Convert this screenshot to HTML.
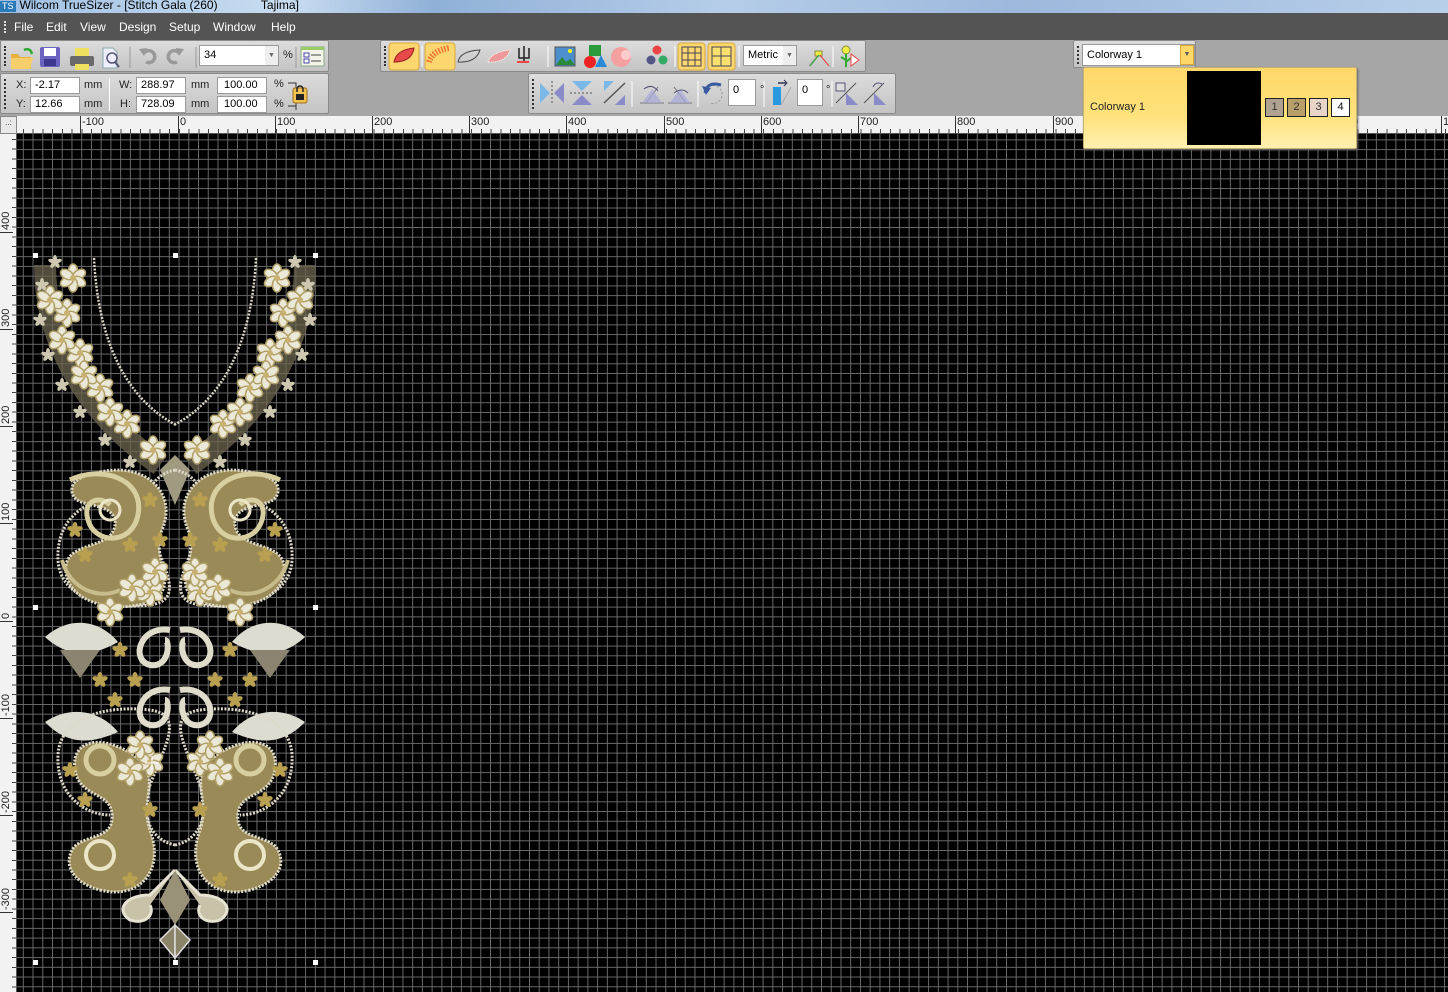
<!DOCTYPE html>
<html><head><meta charset="utf-8">
<style>
*{margin:0;padding:0;box-sizing:border-box}
body{width:1448px;height:992px;overflow:hidden;background:#a6a6a6;font-family:"Liberation Sans",sans-serif;position:relative}
.abs{position:absolute}
#title{left:0;top:0;width:1448px;height:13px;background:linear-gradient(90deg,#9fc0e4 0%,#c9ddf0 20%,#8fb0d8 30%,#b5cde8 50%,#9cb8dc 70%,#b8cfe9 100%);font-size:12px;line-height:11px;color:#000;overflow:hidden}
#menu{left:0;top:13px;width:1448px;height:27px;background:#545454;color:#fff;font-size:12px}
#menu span{position:absolute;top:7px}
.panel{background:linear-gradient(#dcdcdc,#c4c4c4);border:1px solid #8a8a8a;border-radius:2px}
.grip{position:absolute;left:3px;top:5px;width:2px;border-left:2px dotted #333}
.box{position:absolute;background:#fff;border:1px solid #9a9a9a;font-size:11px;line-height:15px;padding-left:4px;color:#000}
.lbl{position:absolute;font-size:11px;color:#222}
#canvas{left:17px;top:134px;width:1431px;height:858px;background-color:#000;
background-image:linear-gradient(90deg,#6a6a6a 1px,transparent 1px),linear-gradient(#6a6a6a 1px,transparent 1px);
background-size:9.74px 9.74px;background-position:5.8px 5.4px}
#hruler{left:17px;top:116px;width:1431px;height:18px;background:#f2f2f2;border-bottom:1px solid #555;
background-image:repeating-linear-gradient(90deg,#444 0 1px,transparent 1px 9.74px);background-size:100% 5px;background-repeat:no-repeat;background-position:5.8px 13px}
#vruler{left:0;top:134px;width:17px;height:858px;background:#f2f2f2;border-right:1px solid #555;
background-image:repeating-linear-gradient(180deg,#444 0 1px,transparent 1px 9.74px);background-size:5px 100%;background-repeat:no-repeat;background-position:12px 5.4px}
.hl{position:absolute;top:116px;font-size:11px;color:#222;border-left:1px solid #333;height:18px;padding-left:1px;line-height:12px}
.vl{position:absolute;left:0;font-size:11px;color:#222;transform:rotate(-90deg);transform-origin:0 0;width:30px;border-left:1px solid #333;height:13px;line-height:12px;padding-left:2px}
.hd{position:absolute;width:5px;height:5px;background:#fff}
</style></head><body>
<div id="title" class="abs"><span style="display:inline-block;background:#2a7ab8;color:#fff;font-size:9px;padding:0 2px;margin-right:4px">TS</span>Wilcom TrueSizer - [Stitch Gala (260)&nbsp;&nbsp;&nbsp;&nbsp;&nbsp;&nbsp;&nbsp;&nbsp;&nbsp;&nbsp;&nbsp;&nbsp;&nbsp;Tajima]</div>
<div id="menu" class="abs">
<div style="position:absolute;left:4px;top:8px;height:12px;border-left:2px dotted #ddd"></div>
<span style="left:14px">File</span><span style="left:46px">Edit</span><span style="left:80px">View</span><span style="left:119px">Design</span><span style="left:169px">Setup</span><span style="left:213px">Window</span><span style="left:271px">Help</span></div>

<div class="abs panel" style="left:0;top:40px;width:329px;height:32px"><div class="grip" style="height:20px"></div></div>
<svg class="abs" style="left:0;top:40px" width="330" height="32">
<path d="M11 14h7l2 3h11v12H11z" fill="#e8b040"/><path d="M11 18h22l-3 11H11z" fill="#f6cf6a"/><path d="M24 10q6-3 8 4" stroke="#3a3" stroke-width="2.5" fill="none"/>
<rect x="40" y="7" width="20" height="20" rx="2" fill="#6a64c0"/><rect x="44" y="8" width="12" height="8" fill="#fff"/><rect x="44" y="19" width="12" height="7" fill="#3d3890"/>
<rect x="70" y="16" width="24" height="10" rx="2" fill="#6a6a6a"/><rect x="75" y="8" width="14" height="8" fill="#f0e060"/><rect x="75" y="24" width="14" height="6" fill="#f0e060"/>
<path d="M103 8h10l4 4v16h-14z" fill="#eef" stroke="#8aa"/><circle cx="112" cy="18" r="5" fill="none" stroke="#557" stroke-width="1.5"/><path d="M115 22l4 5" stroke="#557" stroke-width="2"/>
<line x1="130" y1="7" x2="130" y2="28" stroke="#999"/>
<path d="M146 22a6 6 0 1 0-2-9" stroke="#999" stroke-width="3.5" fill="none"/><path d="M139 9l5 7 3-8z" fill="#999"/>
<path d="M177 22a6 6 0 1 1 2-9" stroke="#999" stroke-width="3.5" fill="none"/><path d="M184 9l-5 7-3-8z" fill="#999"/>
<line x1="196" y1="7" x2="196" y2="28" stroke="#999"/>
<line x1="296" y1="7" x2="296" y2="28" stroke="#999"/>
<rect x="301" y="7" width="23" height="19" fill="#f4f4e8" stroke="#8a8"/><rect x="301" y="7" width="23" height="3" fill="#9c6"/><rect x="304" y="13" width="5" height="4" fill="#fff" stroke="#44a"/><rect x="304" y="19" width="5" height="4" fill="#fff" stroke="#44a"/><line x1="311" y1="15" x2="321" y2="15" stroke="#444"/><line x1="311" y1="21" x2="321" y2="21" stroke="#444"/>
</svg>
<div class="box" style="left:199px;top:45px;width:80px;height:21px;line-height:19px">34</div>
<div class="abs" style="left:265px;top:46px;width:13px;height:19px;background:#eee;font-size:7px;color:#666;text-align:center;line-height:19px">▼</div>
<div class="lbl" style="left:283px;top:49px">%</div>

<div class="abs panel" style="left:0;top:73px;width:329px;height:41px"><div class="grip" style="height:30px"></div></div>
<div class="lbl" style="left:16px;top:79px">X:</div><div class="box" style="left:30px;top:77px;width:50px;height:17px">-2.17</div><div class="lbl" style="left:84px;top:79px">mm</div>
<div class="lbl" style="left:16px;top:98px">Y:</div><div class="box" style="left:30px;top:96px;width:50px;height:17px">12.66</div><div class="lbl" style="left:84px;top:98px">mm</div>
<div class="abs" style="left:109px;top:78px;height:33px;border-left:1px solid #fff"></div>
<div class="lbl" style="left:119px;top:79px">W:</div><div class="box" style="left:136px;top:77px;width:50px;height:17px">288.97</div><div class="lbl" style="left:191px;top:79px">mm</div>
<div class="lbl" style="left:120px;top:98px">H:</div><div class="box" style="left:136px;top:96px;width:50px;height:17px">728.09</div><div class="lbl" style="left:191px;top:98px">mm</div>
<div class="box" style="left:217px;top:77px;width:50px;height:17px;padding-left:6px">100.00</div><div class="lbl" style="left:274px;top:78px">%</div>
<div class="box" style="left:217px;top:96px;width:50px;height:17px;padding-left:6px">100.00</div><div class="lbl" style="left:274px;top:98px">%</div>
<svg class="abs" style="left:286px;top:80px" width="30" height="30"><path d="M2 3h8v27M2 26h8" stroke="#333" fill="none"/><rect x="7" y="8" width="14" height="15" rx="2" fill="#f0c050" stroke="#a07020"/><rect x="10" y="14" width="8" height="6" fill="#222"/><path d="M11 12v-3a3 3 0 0 1 6 0v3" stroke="#222" fill="none" stroke-width="1.5"/></svg>

<div class="abs panel" style="left:380px;top:40px;width:486px;height:32px"><div class="grip" style="height:20px"></div></div>
<svg class="abs" style="left:380px;top:40px" width="490" height="32">
<rect x="9" y="3" width="30" height="27" rx="3" fill="#fcd770" stroke="#d8a838"/><path d="M14 22q2-12 20-14q-2 14-20 14z" fill="#e84a4a" stroke="#922"/>
<line x1="42" y1="6" x2="42" y2="27" stroke="#fff"/>
<rect x="45" y="3" width="30" height="27" rx="3" fill="#fcd770" stroke="#d8a838"/><path d="M49 22q3-11 20-14" stroke="#f07030" stroke-width="6" stroke-dasharray="1.5 1.5" fill="none"/>
<path d="M78 22q2-11 22-12q-4 13-22 12z" fill="none" stroke="#444"/>
<path d="M108 22q3-10 22-12q-4 13-22 12z" fill="#e99" stroke="#fff" stroke-dasharray="1 1"/>
<path d="M144 6v16M139 8v10h10v-10" stroke="#222" fill="none" stroke-width="1.5"/><path d="M137 22h12" stroke="#e44" stroke-width="2"/>
<line x1="168" y1="6" x2="168" y2="27" stroke="#fff"/>
<rect x="175" y="7" width="20" height="19" fill="#4b8fcc" stroke="#555"/><path d="M176 25l6-8 4 5 4-3 5 6z" fill="#2a8a3a"/><circle cx="190" cy="11" r="2" fill="#ff0"/>
<rect x="209" y="5" width="12" height="11" fill="#2a9a3a"/><circle cx="210" cy="22" r="6" fill="#e22"/><path d="M215 27l6-12 6 12z" fill="#2a8ad8"/>
<circle cx="241" cy="17" r="10" fill="#f4a0a0"/><circle cx="246" cy="15" r="5" fill="#fcc"/>
<circle cx="277" cy="10" r="4.5" fill="#e44"/><circle cx="271" cy="20" r="4.5" fill="#558"/><circle cx="283" cy="20" r="4.5" fill="#3a6"/>
<line x1="295" y1="6" x2="295" y2="27" stroke="#fff"/>
<rect x="298" y="3" width="27" height="27" rx="3" fill="#fcd770" stroke="#d8a838"/><rect x="302" y="7" width="19" height="19" fill="none" stroke="#445"/><path d="M308 7v19M315 7v19M302 13h19M302 20h19" stroke="#445"/>
<rect x="328" y="3" width="27" height="27" rx="3" fill="#fcd770" stroke="#d8a838"/><rect x="332" y="7" width="19" height="19" fill="#fae070" stroke="#445"/><path d="M341 7v19M332 16h19" stroke="#445"/>
<line x1="359" y1="6" x2="359" y2="27" stroke="#fff"/>
<path d="M429 26l10-12 10 12" stroke="#999" fill="none"/><rect x="435" y="11" width="7" height="5" fill="#ee4" stroke="#884"/><path d="M430 26l9-11" stroke="#3a3"/><path d="M440 15l9 11" stroke="#e44"/>
<line x1="453" y1="6" x2="453" y2="27" stroke="#fff"/>
<circle cx="466" cy="10" r="4" fill="#ee4" stroke="#884"/><path d="M466 14v13M466 20l-5-3M466 22l5-4" stroke="#3a3" stroke-width="2"/><path d="M471 14v12l8-6z" fill="#fff" stroke="#e44"/>
</svg>
<div class="box" style="left:743px;top:45px;width:54px;height:21px;line-height:19px">Metric</div>
<div class="abs" style="left:783px;top:46px;width:13px;height:19px;background:#eee;font-size:7px;color:#666;text-align:center;line-height:19px">▼</div>

<div class="abs panel" style="left:528px;top:73px;width:368px;height:41px"><div class="grip" style="height:30px"></div></div>
<svg class="abs" style="left:528px;top:73px" width="370" height="41">
<path d="M12 10v20l10-10z" fill="#7ab8e8"/><path d="M36 10v20l-10-10z" fill="#8a8ac8"/><path d="M24 8v24" stroke="#555" stroke-dasharray="2 2"/>
<path d="M44 8h20l-10 10z" fill="#7ab8e8"/><path d="M44 32h20l-10-10z" fill="#8a8ac8"/><path d="M42 20h24" stroke="#555" stroke-dasharray="2 2"/>
<path d="M76 8h10l-10 10z" fill="#7ab8e8"/><path d="M97 32h-10l10-10z" fill="#8a8ac8"/><path d="M76 30l21-20" stroke="#555" stroke-width="1.5"/>
<line x1="104" y1="8" x2="104" y2="34" stroke="#fff"/>
<path d="M112 30h24M118 30l12-16" stroke="#777" fill="none"/><path d="M114 30l10-14 10 14z" fill="#a8a8d8" opacity=".7"/><path d="M116 16q8-6 14 2" stroke="#557" fill="none"/>
<path d="M140 30h24M158 30l-12-16" stroke="#777" fill="none"/><path d="M142 30l10-14 10 14z" fill="#a8a8d8" opacity=".7"/><path d="M146 20q8-6 14 0" stroke="#557" fill="none"/>
<line x1="170" y1="8" x2="170" y2="34" stroke="#fff"/>
<path d="M178 16a9 9 0 1 1 4 14" stroke="#999" stroke-dasharray="2 2" fill="none"/><path d="M177 20q2-12 16-8" stroke="#3a5aa0" stroke-width="3" fill="none"/><path d="M174 13l4 9 5-7z" fill="#3a5aa0"/>
<line x1="236" y1="8" x2="236" y2="34" stroke="#fff"/>
<path d="M245 14h8v18h-8z" fill="#2a9ae0"/><path d="M253 32l10-18" stroke="#aaa" fill="none"/><path d="M250 10h8" stroke="#335" stroke-width="1.5"/><path d="M256 7l3 3-3 3" stroke="#335" fill="none"/>
<line x1="304" y1="8" x2="304" y2="34" stroke="#fff"/>
<rect x="308" y="10" width="9" height="8" fill="#ddd" stroke="#557"/><path d="M318 32h12l-12-12z" fill="#8a8ac8"/><path d="M308 30l20-20" stroke="#555"/>
<path d="M346 32h12l-12-12z" fill="#8a8ac8"/><path d="M336 30l20-20" stroke="#555"/><path d="M345 14q3-6 9-3" stroke="#557" fill="none"/>
</svg>
<div class="box" style="left:728px;top:79px;width:28px;height:27px;line-height:20px">0</div><div class="lbl" style="left:760px;top:84px">°</div>
<div class="box" style="left:797px;top:79px;width:26px;height:27px;line-height:20px">0</div><div class="lbl" style="left:826px;top:84px">°</div>

<div class="abs panel" style="left:1073px;top:40px;width:123px;height:28px"><div class="grip" style="height:18px"></div></div>
<div class="box" style="left:1082px;top:44px;width:113px;height:22px;line-height:20px;font-size:11px">Colorway 1</div>
<div class="abs" style="left:1180px;top:45px;width:14px;height:20px;background:#fcd868;border:1px solid #d8a838;font-size:7px;text-align:center;line-height:18px;color:#555">▼</div>

<div id="hruler" class="abs"></div>
<div id="vruler" class="abs"></div>
<div class="abs" style="left:0;top:116px;width:17px;height:18px;background:#e8e8e8;border:1px solid #888;font-size:8px;color:#333;text-align:center;line-height:12px">..:</div>
<div class="hl" style="left:80px">-100</div><div class="hl" style="left:178px">0</div><div class="hl" style="left:275px">100</div><div class="hl" style="left:372px">200</div><div class="hl" style="left:469px">300</div><div class="hl" style="left:566px">400</div><div class="hl" style="left:664px">500</div><div class="hl" style="left:761px">600</div><div class="hl" style="left:858px">700</div><div class="hl" style="left:955px">800</div><div class="hl" style="left:1053px">900</div><div class="hl" style="left:1344px">00</div><div class="hl" style="left:1441px">1</div>
<div class="vl" style="top:233px">400</div><div class="vl" style="top:330px">300</div><div class="vl" style="top:427px">200</div><div class="vl" style="top:524px">100</div><div class="vl" style="top:622px">0</div><div class="vl" style="top:719px">-100</div><div class="vl" style="top:816px">-200</div><div class="vl" style="top:913px">-300</div>

<div id="canvas" class="abs"></div>

<svg class="abs" style="left:0;top:0" width="360" height="992">
<defs>
<g id="fl"><g fill="#ece8d8" stroke="#b0a068" stroke-width="1.5"><ellipse cx="0" cy="-7" rx="4.5" ry="7"/><ellipse cx="0" cy="-7" rx="4.5" ry="7" transform="rotate(60)"/><ellipse cx="0" cy="-7" rx="4.5" ry="7" transform="rotate(120)"/><ellipse cx="0" cy="-7" rx="4.5" ry="7" transform="rotate(180)"/><ellipse cx="0" cy="-7" rx="4.5" ry="7" transform="rotate(240)"/><ellipse cx="0" cy="-7" rx="4.5" ry="7" transform="rotate(300)"/></g><circle r="3" fill="#c8b070"/></g>
<g id="sf"><g fill="#cfc8b0"><ellipse cx="0" cy="-3.5" rx="2" ry="3.5"/><ellipse cx="0" cy="-3.5" rx="2" ry="3.5" transform="rotate(72)"/><ellipse cx="0" cy="-3.5" rx="2" ry="3.5" transform="rotate(144)"/><ellipse cx="0" cy="-3.5" rx="2" ry="3.5" transform="rotate(216)"/><ellipse cx="0" cy="-3.5" rx="2" ry="3.5" transform="rotate(288)"/></g></g>
<g id="gf"><g fill="#b8a050"><ellipse cx="0" cy="-4" rx="2.5" ry="4"/><ellipse cx="0" cy="-4" rx="2.5" ry="4" transform="rotate(72)"/><ellipse cx="0" cy="-4" rx="2.5" ry="4" transform="rotate(144)"/><ellipse cx="0" cy="-4" rx="2.5" ry="4" transform="rotate(216)"/><ellipse cx="0" cy="-4" rx="2.5" ry="4" transform="rotate(288)"/></g></g>
<g id="half">
<path d="M94 258C98 340 125 398 176 425" stroke="#d8d4c4" stroke-width="2.5" stroke-dasharray="2 1.5" fill="none"/>
<path d="M45 265C45 330 75 405 160 465" stroke="#6e6650" stroke-width="22" fill="none" opacity=".75"/>
<use href="#sf" x="42" y="285"/><use href="#sf" x="40" y="320"/><use href="#sf" x="48" y="355"/><use href="#sf" x="62" y="385"/><use href="#sf" x="80" y="412"/><use href="#sf" x="105" y="440"/><use href="#sf" x="130" y="462"/><use href="#sf" x="55" y="262"/>
<use href="#fl" x="73" y="278"/><use href="#fl" x="67" y="313"/><use href="#fl" x="80" y="353"/><use href="#fl" x="100" y="388"/><use href="#fl" x="127" y="424"/><use href="#fl" x="153" y="450"/><use href="#fl" x="50" y="300"/><use href="#fl" x="62" y="340"/><use href="#fl" x="84" y="375"/><use href="#fl" x="110" y="412"/>
<path d="M175 455L160 470L175 505z" fill="#a09a80"/>
<path d="M175 470C150 475 140 500 150 530C165 570 185 600 150 605C110 610 60 600 58 560C56 520 85 500 110 500" fill="none" stroke="#ddd8c8" stroke-width="3" stroke-dasharray="2 1.5"/>
<path d="M100 472C145 462 178 492 162 530C150 560 182 585 150 602C110 615 62 600 66 565C70 540 118 550 115 520C110 500 75 510 72 492C70 478 88 475 100 472z" fill="#9a8a58" stroke="#e0dccb" stroke-width="3" stroke-dasharray="2 1.5"/>
<path d="M70 480C100 465 145 478 138 515C132 545 95 545 88 520C82 500 100 495 110 505" fill="none" stroke="#d8cfa0" stroke-width="5"/>
<circle cx="110" cy="510" r="10" fill="none" stroke="#ece6c8" stroke-width="3"/>
<path d="M62 560C70 590 100 600 120 590" fill="none" stroke="#c8bc8c" stroke-width="4"/>
<use href="#gf" x="150" y="500"/><use href="#gf" x="130" y="545"/><use href="#gf" x="85" y="555"/><use href="#gf" x="160" y="540"/><use href="#gf" x="75" y="530"/>
<use href="#fl" x="150" y="592"/><use href="#fl" x="132" y="588"/><use href="#fl" x="155" y="572"/>
<path d="M45 637C70 615 100 620 118 642C95 655 70 660 45 637z" fill="#dcdcd0"/>
<path d="M45 722C70 705 100 710 118 732C95 742 70 748 45 722z" fill="#dcdcd0"/>
<path d="M60 650L80 678L100 650" fill="#8a8470"/>
<path d="M170 630C140 625 130 660 150 665C170 668 170 640 165 640" fill="none" stroke="#e0dccb" stroke-width="6"/>
<path d="M170 690C140 685 130 720 150 725C170 728 170 700 165 700" fill="none" stroke="#e0dccb" stroke-width="6"/>
<use href="#gf" x="120" y="650"/><use href="#gf" x="115" y="700"/><use href="#gf" x="135" y="680"/><use href="#fl" x="110" y="612"/><use href="#gf" x="100" y="680"/>
<path d="M175 845C150 840 140 815 150 785C165 745 185 715 150 710C110 705 60 715 58 755C56 795 85 815 110 815" fill="none" stroke="#ddd8c8" stroke-width="3" stroke-dasharray="2 1.5"/>
<path d="M100 890C140 900 165 870 150 830C140 800 160 780 140 760C110 735 70 735 75 770C80 800 115 790 112 820C110 840 80 835 72 850C62 870 80 885 100 890z" fill="#9a8a58" stroke="#e0dccb" stroke-width="3" stroke-dasharray="2 1.5"/>
<circle cx="100" cy="855" r="14" fill="none" stroke="#ece6c8" stroke-width="4"/>
<circle cx="100" cy="760" r="14" fill="none" stroke="#d8cfa0" stroke-width="5"/>
<use href="#fl" x="150" y="762"/><use href="#fl" x="130" y="772"/><use href="#fl" x="140" y="745"/>
<use href="#gf" x="70" y="770"/><use href="#gf" x="150" y="810"/><use href="#gf" x="130" y="880"/><use href="#gf" x="85" y="800"/>
<path d="M175 870L150 895C125 895 115 910 130 920C145 925 155 915 150 905" fill="#c8c2a8" stroke="#e8e4d4" stroke-width="3"/>
<path d="M175 925L160 940L175 958z" fill="#8a8468" stroke="#ddd" stroke-width="1.5"/>
<path d="M175 870L160 900L175 925z" fill="#9a9278"/>
</g>
</defs>
<use href="#half"/>
<use href="#half" transform="translate(350,0) scale(-1,1)"/>
<path d="M145 763h14M152 756v14" stroke="#fff" stroke-width="1"/>
</svg>
<div class="hd" style="left:33px;top:253px"></div><div class="hd" style="left:173px;top:253px"></div><div class="hd" style="left:313px;top:253px"></div>
<div class="hd" style="left:33px;top:605px"></div><div class="hd" style="left:313px;top:605px"></div>
<div class="hd" style="left:33px;top:960px"></div><div class="hd" style="left:173px;top:960px"></div><div class="hd" style="left:313px;top:960px"></div>

<div class="abs" style="left:1083px;top:67px;width:274px;height:82px;background:linear-gradient(#ffd868,#ffe27c 60%,#fff0b0);border:1px solid #c8b070;box-shadow:1px 1px 2px #666;border-radius:2px"></div>
<div class="abs" style="left:1090px;top:101px;font-size:11px;color:#222">Colorway 1</div>
<div class="abs" style="left:1187px;top:71px;width:74px;height:74px;background:#000"></div>
<div class="abs" style="left:1265px;top:98px;width:19px;height:19px;background:#b0a290;border:1px solid #222;font-size:11px;text-align:center;line-height:17px;color:#333">1</div>
<div class="abs" style="left:1287px;top:98px;width:19px;height:19px;background:#b89e68;border:1px solid #222;font-size:11px;text-align:center;line-height:17px;color:#333">2</div>
<div class="abs" style="left:1309px;top:98px;width:19px;height:19px;background:#e8d4c8;border:1px solid #222;font-size:11px;text-align:center;line-height:17px;color:#333">3</div>
<div class="abs" style="left:1331px;top:98px;width:19px;height:19px;background:#fff;border:1px solid #222;font-size:11px;text-align:center;line-height:17px;color:#111">4</div>
</body></html>
